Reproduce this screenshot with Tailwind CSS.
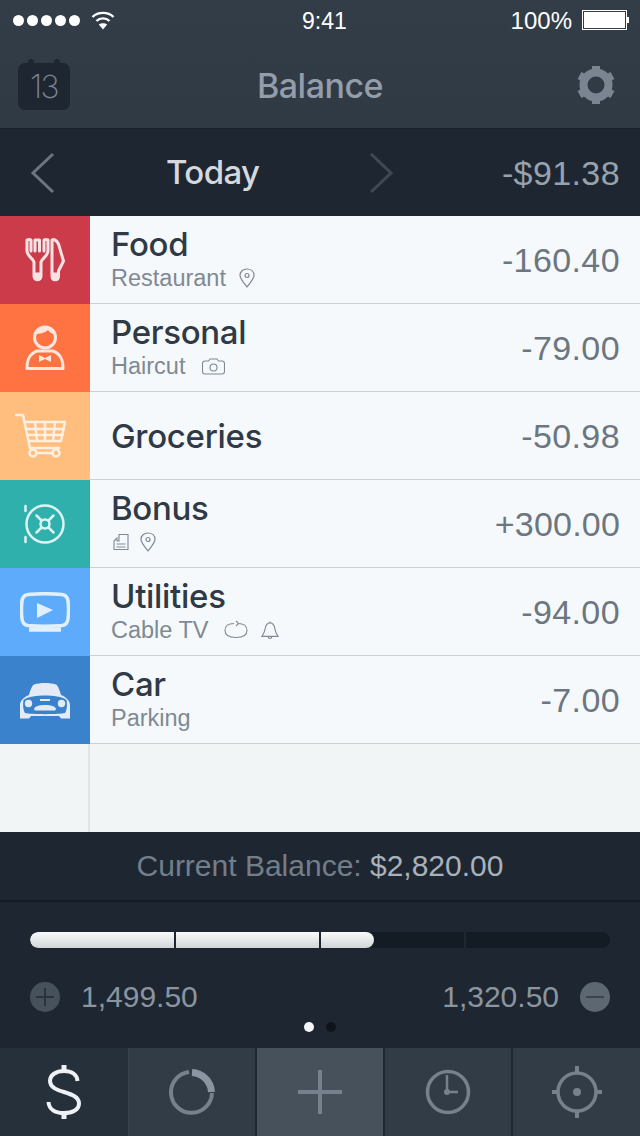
<!DOCTYPE html>
<html>
<head>
<meta charset="utf-8">
<script src="https://cdn.jsdelivr.net/npm/@tailwindcss/browser@4"></script>
</head>
<body class="bg-[#1e2731]">
<div class="w-[640px] h-[1136px] overflow-hidden flex flex-col font-['Liberation_Sans',sans-serif] bg-[#1e2731]">

  <!-- top -->
  <div class="h-[129px] shrink-0 flex flex-col bg-gradient-to-b from-[#333d48] to-[#303a45] border-b border-[#1a222b]">
    <div class="h-[40px] flex items-center justify-between pl-[13px] pr-[11px] text-white relative">
      <div class="flex items-center gap-[10px]">
        <div class="flex gap-[3px]">
          <span class="w-[11px] h-[11px] rounded-full bg-white"></span>
          <span class="w-[11px] h-[11px] rounded-full bg-white"></span>
          <span class="w-[11px] h-[11px] rounded-full bg-white"></span>
          <span class="w-[11px] h-[11px] rounded-full bg-white"></span>
          <span class="w-[11px] h-[11px] rounded-full bg-white"></span>
        </div>
        <svg width="26" height="20" viewBox="0 0 24 20" fill="none" stroke="white" stroke-width="2.4"><path d="M1.5 7C7 1.5 17 1.500 22.500 7"/><path d="M5.500 11C9 7.500 15 7.500 18.500 11"/><path d="M12 19.500 L7.800 14.500 C10 12.700 14 12.700 16.200 14.500 Z" fill="white" stroke="none"/></svg>
      </div>
      <div class="absolute left-[302px] top-[9px] text-[23px] leading-[24px]">9:41</div>
      <div class="flex items-center gap-[10px]">
        <span class="text-[24px] leading-[24px] mt-[1px]">100%</span>
        <div class="flex items-center">
          <div class="w-[45px] h-[20px] border border-white p-[1px]"><div class="w-full h-full bg-white"></div></div>
          <div class="w-[2px] h-[6px] bg-white"></div>
        </div>
      </div>
    </div>
    <div class="flex-1 flex items-center justify-between pl-[18px] pr-[24px] relative">
      <div class="relative w-[52px] h-[47px] mt-[4px] rounded-[7px] bg-[#1e2731] flex items-center justify-center text-[#7a8591] text-[32px] leading-none pt-[2px] tracking-[-1.5px] font-extralight font-['Inter',sans-serif]">13
        <span class="absolute left-[10px] -top-[4px] w-[6px] h-[6px] rounded-full bg-[#1e2731]"></span>
        <span class="absolute left-[36px] -top-[4px] w-[6px] h-[6px] rounded-full bg-[#1e2731]"></span>
      </div>
      <div class="absolute left-0 right-0 text-center text-[34px] leading-[36px] mt-[3px] font-medium font-['Inter',sans-serif] tracking-[-0.5px] text-[#939eaa]">Balance</div>
      <svg class="mt-[1px]" width="40" height="46" viewBox="0 0 40 46" fill="none">
        <circle cx="20" cy="23" r="12.500" stroke="#7b8591" stroke-width="8"/>
        <g stroke="#7b8591" stroke-width="8">
          <path d="M20 4V10"/><path d="M20 36V42"/>
          <path d="M3.500 13.500L9 16.500"/><path d="M31 29.500L36.500 32.500"/>
          <path d="M3.500 32.500L9 29.500"/><path d="M31 16.500L36.500 13.500"/>
        </g>
      </svg>
    </div>
  </div>

  <!-- date -->
  <div class="h-[87px] shrink-0 flex items-center relative bg-[#1e2731]">
    <svg class="absolute left-[29px] top-[23px]" width="28" height="42" viewBox="0 0 28 42" fill="none" stroke="#6b7682" stroke-width="3"><path d="M24 2L4 21L24 40"/></svg>
    <div class="absolute left-[166px] top-[24px] text-[33px] leading-[38px] font-medium font-['Inter',sans-serif] tracking-[-0.6px] text-[#d5d9dd]">Today</div>
    <svg class="absolute left-[367px] top-[23px]" width="28" height="42" viewBox="0 0 28 42" fill="none" stroke="#3f4955" stroke-width="3"><path d="M4 2L24 21L4 40"/></svg>
    <div class="absolute right-[20px] top-[25px] text-[34px] leading-[38px] tracking-[0.4px] text-[#98a2ad]">-$91.38</div>
  </div>

  <!-- list -->
  <div class="flex flex-col shrink-0 bg-[#f1f5f7]">

    <div class="h-[88px] flex">
      <div class="w-[90px] shrink-0 bg-[#cc3b4a] flex items-center justify-center">
        <svg width="40" height="44" viewBox="0 0 40 44" fill="none" stroke="#f8e3e4" stroke-width="3" stroke-linejoin="round" stroke-linecap="round">
          <path d="M2 2V13C2 18 7 19 9 24V38C9 43 16 43 16 38V24C18 19 23 18 23 13V2C21.500 1.500 20 1.500 19 2V13M10 2V13M14.500 2V13M2 2C3 1.500 5 1.500 6 2V13M10 2H14.500" />
          <path d="M10 36H15V40H10Z" fill="#f8e3e4"/>
          <path d="M27 2V38C27 43 33.500 43 33.500 38V33L38.500 23L33.500 6C31.500 2 29 1 27 2Z"/>
          <path d="M28 36H32.500V40H28Z" fill="#f8e3e4"/>
        </svg>
      </div>
      <div class="flex-1 flex items-center justify-between bg-[#f6f9fb] border-b border-[#ccd1d5] pl-[21px] pr-[20px]">
        <div class="flex flex-col self-start pt-[10px]">
          <div class="text-[33px] leading-[36px] mb-[3px] font-medium font-['Inter',sans-serif] tracking-[-0.3px] text-[#303a46]">Food</div>
          <div class="flex items-center gap-[13px] h-[26px] text-[#7f8994] text-[23.500px] leading-[26px]">Restaurant
            <svg width="16" height="20" viewBox="0 0 16 20" fill="none" stroke="#7f8994" stroke-width="1.200"><path d="M8 19C4 14 1 10.500 1 7.500C1 3.500 4 1 8 1C12 1 15 3.500 15 7.500C15 10.500 12 14 8 19Z"/><circle cx="8" cy="7.500" r="2"/></svg>
          </div>
        </div>
        <div class="text-[34px] leading-[38px] tracking-[0.4px] text-[#6c7681]">-160.40</div>
      </div>
    </div>

    <div class="h-[88px] flex">
      <div class="w-[90px] shrink-0 bg-[#ff7342] flex items-center justify-center">
        <svg width="40" height="46" viewBox="0 0 40 46" fill="none" stroke="#fde8df" stroke-width="3" stroke-linejoin="round">
          <circle cx="20" cy="12.500" r="10.500"/>
          <path d="M10 9C11 4 15 2 20 2C25 2 29 4 30 9C27 9 24 7 23 5C20 8 14 9 10 9Z" fill="#fde8df" stroke="none"/>
          <path d="M2 43.500H38C38 35 36 29 28 26H12C4 29 2 35 2 43.500Z"/>
          <path d="M14 30L20 33L26 30V37L20 34L14 37Z" fill="#fde8df" stroke="none"/>
        </svg>
      </div>
      <div class="flex-1 flex items-center justify-between bg-[#f6f9fb] border-b border-[#ccd1d5] pl-[21px] pr-[20px]">
        <div class="flex flex-col self-start pt-[10px]">
          <div class="text-[33px] leading-[36px] mb-[3px] font-medium font-['Inter',sans-serif] tracking-[-0.3px] text-[#303a46]">Personal</div>
          <div class="flex items-center gap-[17px] h-[26px] text-[#7f8994] text-[23.500px] leading-[26px]">Haircut
            <svg width="23" height="17" viewBox="0 0 23 17" fill="none" stroke="#7f8994" stroke-width="1.100"><path d="M3 3H6.500L8 1H15L16.500 3H20C21.500 3 22.500 4 22.500 5.500V13.500C22.500 15 21.500 16 20 16H3C1.500 16 0.500 15 0.500 13.500V5.500C0.500 4 1.500 3 3 3Z"/><circle cx="11.500" cy="9.500" r="3.500"/></svg>
          </div>
        </div>
        <div class="text-[34px] leading-[38px] tracking-[0.4px] text-[#6c7681]">-79.00</div>
      </div>
    </div>

    <div class="h-[88px] flex">
      <div class="w-[90px] shrink-0 bg-[#ffbe7e] flex items-center justify-center">
        <svg width="52" height="46" viewBox="0 0 52 46" fill="none" stroke="#fdf0e3" stroke-width="2.500" stroke-linejoin="round" stroke-linecap="round" class="mr-[8px]">
          <path d="M1 2H8L15 35H44"/>
          <path d="M10 9H50L46 28H14"/>
          <path d="M12 16H48.500M13.500 22H47.500"/>
          <path d="M20 9L22 28M30 9V28M40 9L38 28"/>
          <circle cx="18" cy="40" r="3.500"/><circle cx="41" cy="40" r="3.500"/>
          <path d="M21 40H38"/>
        </svg>
      </div>
      <div class="flex-1 flex items-center justify-between bg-[#f6f9fb] border-b border-[#ccd1d5] pl-[21px] pr-[20px]">
        <div class="text-[33px] leading-[36px] mt-[1px] font-medium font-['Inter',sans-serif] tracking-[-0.3px] text-[#303a46]">Groceries</div>
        <div class="text-[34px] leading-[38px] tracking-[0.4px] text-[#6c7681]">-50.98</div>
      </div>
    </div>

    <div class="h-[88px] flex">
      <div class="w-[90px] shrink-0 bg-[#2fb0ad] flex items-center justify-center">
        <svg width="42" height="42" viewBox="0 0 42 42" fill="none" stroke="#dcf4f2" stroke-width="2.500" stroke-linecap="round" class="mb-[1px]">
          <circle cx="21" cy="21" r="18.500"/>
          <circle cx="21" cy="21" r="4.500"/>
          <path d="M17.500 17.500L12.500 12.500M24.500 17.500L29.500 12.500M17.500 24.500L12.500 29.500M24.500 24.500L29.500 29.500"/>
          <path d="M1.500 3V8M1.500 34V39"/>
        </svg>
      </div>
      <div class="flex-1 flex items-center justify-between bg-[#f6f9fb] border-b border-[#ccd1d5] pl-[21px] pr-[20px]">
        <div class="flex flex-col self-start pt-[10px]">
          <div class="text-[33px] leading-[36px] mb-[3px] font-medium font-['Inter',sans-serif] tracking-[-0.3px] text-[#303a46]">Bonus</div>
          <div class="flex items-center gap-[11px] h-[26px]">
            <svg width="16" height="18" viewBox="0 0 16 18" fill="none" stroke="#7f8994" stroke-width="1.100" class="ml-[2px]"><path d="M1 16.500V8L4 5V8H6V1.500H15V16.500Z"/><path d="M3.500 11H12.500M3.500 14H12.500"/></svg>
            <svg width="16" height="20" viewBox="0 0 16 20" fill="none" stroke="#7f8994" stroke-width="1.200"><path d="M8 19C4 14 1 10.500 1 7.500C1 3.500 4 1 8 1C12 1 15 3.500 15 7.500C15 10.500 12 14 8 19Z"/><circle cx="8" cy="7.500" r="2"/></svg>
          </div>
        </div>
        <div class="text-[34px] leading-[38px] tracking-[0.2px] text-[#6c7681]">+300.00</div>
      </div>
    </div>

    <div class="h-[88px] flex">
      <div class="w-[90px] shrink-0 bg-[#5dabfa] flex items-center justify-center">
        <svg width="50" height="40" viewBox="0 0 50 40" fill="none" stroke="#e2f0fe" stroke-width="3.500" stroke-linejoin="round" class="mb-[1px]">
          <path d="M8 2.500C19 1.500 31 1.500 42 2.500C46 3 47.500 5 48 9C48.700 15 48.700 21 48 27C47.500 31 46 33 42 33.500C31 34.500 19 34.500 8 33.500C4 33 2.500 31 2 27C1.300 21 1.300 15 2 9C2.500 5 4 3 8 2.500Z"/>
          <path d="M17 11L33 18L17 26Z" fill="#e2f0fe" stroke="none"/>
          <path d="M9 37.500H41" stroke-width="4.500"/>
        </svg>
      </div>
      <div class="flex-1 flex items-center justify-between bg-[#f6f9fb] border-b border-[#ccd1d5] pl-[21px] pr-[20px]">
        <div class="flex flex-col self-start pt-[10px]">
          <div class="text-[33px] leading-[36px] mb-[3px] font-medium font-['Inter',sans-serif] tracking-[-0.3px] text-[#303a46]">Utilities</div>
          <div class="flex items-center h-[26px] text-[#7f8994] text-[23.500px] leading-[26px]">Cable TV
            <svg width="24" height="20" viewBox="0 0 24 20" fill="none" stroke="#7f8994" stroke-width="1.100" class="ml-[15px]"><path d="M10 3.500C4.500 3.500 1 6 1 10.500C1 15 5 17.500 12 17.500C19 17.500 23 15 23 10.500C23 6 19.500 3.500 14 3.500"/><path d="M12 1L14.500 3.500L12 6"/></svg>
            <svg width="18" height="21" viewBox="0 0 20 21" fill="none" stroke="#7f8994" stroke-width="1.200" class="ml-[13px]"><path d="M10 2C6 2 5 5 4.500 9C4 13 2 15 1 17H19C18 15 16 13 15.500 9C15 5 14 2 10 2Z"/><path d="M8 17.500C8 20 12 20 12 17.500"/><path d="M10 2V0.500"/></svg>
          </div>
        </div>
        <div class="text-[34px] leading-[38px] tracking-[0.4px] text-[#6c7681]">-94.00</div>
      </div>
    </div>

    <div class="h-[88px] flex">
      <div class="w-[90px] shrink-0 bg-[#3b82cc] flex items-center justify-center">
        <svg width="52" height="38" viewBox="0 0 52 38" class="mt-[1px]">
          <path fill="#e3ecf6" d="M10 13C11 9 13 3.500 15 2.500C21 0.500 31 0.500 37 2.500C39 3.500 41 9 42 13C47 15 51 19 51 23V36.500H42L40 34H12L10 36.500H1V23C1 19 5 15 10 13Z"/>
          <path fill="#3b82cc" d="M4.500 18C9 14.500 18 13.500 26 13.500C34 13.500 43 14.500 47.500 18C48.500 24 47.500 29 46 31C40 32.500 12 32.500 6 31C4.500 29 3.500 24 4.500 18Z"/>
          <circle cx="9.500" cy="21.500" r="3.700" fill="#e3ecf6"/><circle cx="42.500" cy="21.500" r="3.700" fill="#e3ecf6"/>
          <path fill="#e3ecf6" d="M15 27C16 24 20 23 26 23C32 23 36 24 37 27C37 28 36 28.500 35 28.500H17C16 28.500 15 28 15 27Z"/>
          <rect x="21" y="17" width="10" height="2" fill="#e3ecf6"/>
        </svg>
      </div>
      <div class="flex-1 flex items-center justify-between bg-[#f6f9fb] border-b border-[#ccd1d5] pl-[21px] pr-[20px]">
        <div class="flex flex-col self-start pt-[10px]">
          <div class="text-[33px] leading-[36px] mb-[3px] font-medium font-['Inter',sans-serif] tracking-[-0.3px] text-[#303a46]">Car</div>
          <div class="h-[26px] text-[#7f8994] text-[23.500px] leading-[26px]">Parking</div>
        </div>
        <div class="text-[34px] leading-[38px] tracking-[0.4px] text-[#6c7681]">-7.00</div>
      </div>
    </div>

    <div class="h-[88px] flex">
      <div class="w-[90px] shrink-0 bg-[#f1f5f6] border-r-2 border-[#e0e4e7]"></div>
      <div class="flex-1 bg-[#f1f5f6]"></div>
    </div>
  </div>

  <!-- balance -->
  <div class="h-[70px] shrink-0 flex items-center justify-center border-b-2 border-[#141b24] text-[30px] leading-[34px]">
    <span class="text-[#737e8a]">Current Balance:&nbsp;</span><span class="text-[#a9b1ba]">$2,820.00</span>
  </div>

  <!-- progress -->
  <div class="h-[146px] shrink-0 relative px-[30px] pt-[30px]">
    <div class="relative h-[16px] rounded-full bg-[#131b25] overflow-hidden">
      <div class="absolute left-0 top-0 bottom-0 w-[344px] rounded-full bg-gradient-to-b from-[#fafbfb] to-[#d2d6d8]"></div>
      <div class="absolute left-[144px] top-0 bottom-0 w-[2px] bg-[#1e2731]"></div>
      <div class="absolute left-[289px] top-0 bottom-0 w-[2px] bg-[#1e2731]"></div>
      <div class="absolute left-[434px] top-0 bottom-0 w-[2px] bg-[#1e2731]"></div>
    </div>
    <div class="flex items-center justify-between mt-[32px]">
      <div class="flex items-center gap-[21px]">
        <div class="w-[30px] h-[30px] rounded-full bg-[#47515c] flex items-center justify-center">
          <svg width="18" height="18" viewBox="0 0 18 18" stroke="#2a333d" stroke-width="2"><path d="M9 0V18M0 9H18"/></svg>
        </div>
        <span class="text-[30px] leading-[34px] text-[#8b95a0]">1,499.50</span>
      </div>
      <div class="flex items-center gap-[21px]">
        <span class="text-[30px] leading-[34px] text-[#8b95a0]">1,320.50</span>
        <div class="w-[30px] h-[30px] rounded-full bg-[#5d6772] flex items-center justify-center">
          <svg width="18" height="18" viewBox="0 0 18 18" stroke="#3a444f" stroke-width="2"><path d="M0 9H18"/></svg>
        </div>
      </div>
    </div>
    <div class="flex justify-center gap-[12px] mt-[8px]">
      <span class="w-[10px] h-[10px] rounded-full bg-[#f4f6f8]"></span>
      <span class="w-[10px] h-[10px] rounded-full bg-[#0e141b]"></span>
    </div>
  </div>

  <!-- tabs -->
  <div class="h-[88px] shrink-0 flex">
    <div class="w-[129px] flex items-center justify-center bg-[#26303a] border-r border-[#3a444f]">
      <svg width="36" height="56" viewBox="0 0 36 56" fill="none" stroke="#eef2f6" stroke-width="4"><path d="M31.500 17C31 10 25 7 18 7C10 7 4 11 4 17C4 23 10 25.500 18 28C26 30.500 33 33 33 39.500C33 46 26 49 18 49C10 49 3 46 2.500 38"/><path d="M18 1V7M18 49V55" stroke-width="5"/></svg>
    </div>
    <div class="w-[128px] flex items-center justify-center bg-[#323c47] border-r-2 border-[#1f2731]">
      <svg width="46" height="46" viewBox="0 0 46 46" fill="none" stroke="#76818d" stroke-width="4">
        <path d="M20 3A20.500 20.500 0 1 0 43 24"/>
        <path d="M24 2.500A20.500 20.500 0 0 1 43.500 22" stroke="#8a95a1" stroke-width="7" transform="translate(-1 1)"/>
      </svg>
    </div>
    <div class="w-[128px] flex items-center justify-center bg-[#46515c] border-r-2 border-[#1f2731]">
      <svg width="44" height="44" viewBox="0 0 44 44" stroke="#76818d" stroke-width="4"><path d="M22 0V44M0 22H44"/></svg>
    </div>
    <div class="w-[128px] flex items-center justify-center bg-[#323c47] border-r-2 border-[#1f2731]">
      <svg width="46" height="46" viewBox="0 0 46 46" fill="none" stroke="#76818d" stroke-width="3.500">
        <circle cx="23" cy="23" r="20.500"/>
        <path d="M22 6V23H33" stroke-width="2.500"/>
        <circle cx="22" cy="23" r="3" fill="#76818d" stroke="none"/>
      </svg>
    </div>
    <div class="flex-1 flex items-center justify-center bg-[#323c47]">
      <svg width="50" height="52" viewBox="0 0 50 52" fill="none" stroke="#76818d" stroke-width="3.500">
        <circle cx="25" cy="26" r="19"/>
        <circle cx="25" cy="26" r="4" fill="#76818d" stroke="none"/>
        <path d="M25 0V7M25 45V52M0 26H6M44 26H50" stroke-width="4"/>
      </svg>
    </div>
  </div>
</div>
</body>
</html>
